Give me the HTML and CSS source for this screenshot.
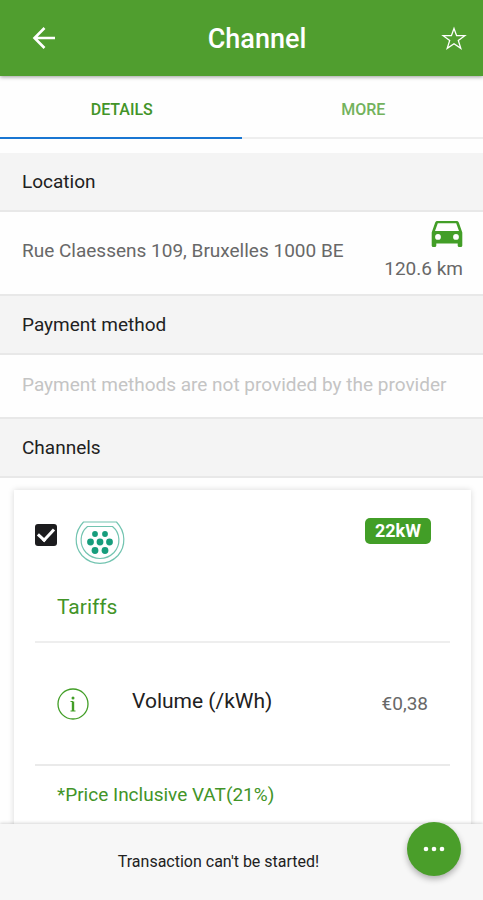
FILE: index.html
```html
<!DOCTYPE html>
<html lang="en">
<head>
<meta charset="utf-8">
<meta name="viewport" content="width=device-width, initial-scale=1">
<title>Channel</title>
<link rel="stylesheet" href="styles.css">
</head>
<body>
<header class="app-bar">
  <button class="icon-button" type="button" aria-label="Back">
    <svg width="24" height="24" viewBox="0 0 24 24" fill="none" stroke="currentColor" stroke-width="2.600"><path d="M23 12H3M12.500 2 2.500 12l10 10"/></svg>
  </button>
  <h1 class="title">Channel</h1>
  <button class="icon-button" type="button" aria-label="Favourite">
    <svg width="26" height="26" viewBox="0 0 26 26" fill="none" stroke="currentColor" stroke-width="1.300"><path d="M13 3.500l2.600 7.200h8.200l-6.500 4.700 2.500 8L13 18.700l-6.800 4.700 2.500-8L2.200 10.700h8.200z"/></svg>
  </button>
</header>
<nav class="tabs">
  <a class="tab active" href="#details">Details</a>
  <a class="tab" href="#more">More</a>
</nav>
<main class="content" id="details">
  <h2 class="band">Location</h2>
  <div class="row location">
    <span class="address">Rue Claessens 109, Bruxelles 1000 BE</span>
    <span class="distance">
      <svg width="32" height="26" viewBox="0 0 32 26"><path fill="#429e27" fill-rule="evenodd" d="M6.500 0h19c1.200 0 2 .7 2.400 1.700L31.300 11.500V24.500c0 .9-.6 1.500-1.500 1.500h-1.600c-.9 0-1.500-.6-1.500-1.500V22.500H5.300v2c0 .9-.6 1.500-1.500 1.500H2.200C1.300 26 .7 25.400.7 24.500v-13L4.100 1.700C4.500.7 5.300 0 6.500 0zM6.800 2.200 4 10h24L25.200 2.200zM7 13a2.900 2.900 0 1 0 0 5.800A2.900 2.900 0 0 0 7 13zm18 0a2.900 2.900 0 1 0 0 5.800A2.900 2.900 0 0 0 25 13z"/></svg>
      120.6 km
    </span>
  </div>
  <h2 class="band">Payment method</h2>
  <p class="row muted">Payment methods are not provided by the provider</p>
  <h2 class="band">Channels</h2>
  <section class="card">
    <div class="connector">
      <input class="check" type="checkbox" aria-label="Select 22kW channel" checked>
      <svg class="plug" width="50" height="44" viewBox="0 0 50 44" fill="none" stroke="#72c4b0" stroke-width="1.200"><path d="M8.500 1h33C51 11 51 25 43 34.500 33 45 17 45 7 34.500-1 25-1 11 8.500 1z"/><path d="M12.500 5.500h25C45.500 12 46 24 39 31.500c-8 8-20 8-28 0C4 24 4.500 12 12.500 5.500z"/><g fill="#179d7c" stroke="none"><circle cx="20" cy="13" r="2.900"/><circle cx="30" cy="13" r="2.900"/><circle cx="15.500" cy="21" r="3.400"/><circle cx="25" cy="21" r="3.400"/><circle cx="34.500" cy="21" r="3.400"/><circle cx="20" cy="29.500" r="3.400"/><circle cx="30" cy="29.500" r="3.400"/></g></svg>
      <span class="power">22kW</span>
    </div>
    <h3 class="tariffs">Tariffs</h3>
    <div class="tariff">
      <button class="info" type="button" aria-label="Tariff information">
        <svg width="32" height="32" viewBox="0 0 32 32" fill="none" stroke="#429e27"><circle cx="16" cy="16" r="15" stroke-width="1.300"/><path stroke-width="2.400" d="M16 13.500V23"/><path stroke-width="1.200" d="M13.500 13.500H16M13.500 23h5"/><circle cx="16" cy="10" r="1.500" fill="#429e27" stroke="none"/></svg>
      </button>
      <span class="name">Volume (/kWh)</span>
      <span class="price">€0,38</span>
    </div>
    <p class="vat">*Price Inclusive VAT(21%)</p>
  </section>
</main>
<footer class="status">
  <p class="message">Transaction can't be started!</p>
  <button class="fab" type="button" aria-label="More actions">
    <svg width="22" height="6" viewBox="0 0 22 6" fill="currentColor"><circle cx="3" cy="3" r="2.300"/><circle cx="11" cy="3" r="2.300"/><circle cx="19" cy="3" r="2.300"/></svg>
  </button>
</footer>
</body>
</html>
```
FILE: styles.css
```css
* { box-sizing: border-box; }
body {
  margin: 0;
  height: 100vh;
  display: flex;
  flex-direction: column;
  overflow: hidden;
  background: #fefefe;
  color: #212121;
  font-family: Roboto, sans-serif;
  font-size: 19px;
  line-height: 24px;
}
h1, h2, h3, p { margin: 0; font-weight: 400; }
button { border: 0; padding: 0; background: none; color: inherit; font: inherit; }
svg { display: block; }

.app-bar {
  flex: none;
  display: flex;
  align-items: center;
  justify-content: space-between;
  height: 76px;
  padding: 0 16px 0 31px;
  background: #509e2f;
  color: #fff;
  box-shadow: 0 1px 4px rgba(0, 0, 0, 0.4);
  position: relative;
}
.icon-button { width: 26px; height: 26px; display: grid; place-items: center; }
.title { margin-left: 16px; padding-top: 2px; font-size: 27px; line-height: 32px; font-weight: 500; }

.tabs { flex: none; display: flex; height: 63px; }
.tab {
  flex: 1;
  display: grid;
  place-items: center;
  padding: 6px 0 0 2px;
  border-bottom: 2px solid #eee;
  color: #73b25d;
  font-size: 16px;
  font-weight: 500;
  text-transform: uppercase;
  text-decoration: none;
}
.tab.active { color: #429428; border-color: #1976d2; }

.content { flex: 1; min-height: 0; overflow: hidden; padding-top: 14px; }
.band {
  padding: 17px 22px 16px;
  background: #f4f4f4;
  border-bottom: 2px solid #e8e8e8;
  font-size: 19px;
}
.row {
  padding: 18px 22px 20px;
  border-bottom: 2px solid #e8e8e8;
}
.location {
  display: flex;
  align-items: center;
  justify-content: space-between;
  padding: 9px 20px 13px 22px;
  color: #686868;
}
.distance {
  display: flex;
  flex-direction: column;
  align-items: flex-end;
  gap: 10px;
}
.muted { color: #c4c4c4; }

.card {
  margin: 12px 12px 0 14px;
  padding: 28px 21px 60px;
  background: #fff;
  box-shadow: 0 0 6px rgba(0, 0, 0, 0.15);
}
.connector { display: flex; align-items: flex-start; }
.check {
  appearance: none;
  width: 22px;
  height: 22px;
  margin: 6px 18px 0 0;
  border-radius: 3px;
  background: #1c1c1e;
  display: grid;
  place-items: center;
}
.check:checked::before {
  content: "";
  width: 13px;
  height: 7px;
  border: solid #fff;
  border-width: 0 0 3px 3px;
  transform: translateY(-2px) rotate(-47deg);
}
.plug { margin-top: 3px; }
.power {
  margin-left: auto;
  margin-right: 19px;
  padding: 1px 10px;
  border-radius: 5px;
  background: #429e27;
  color: #fff;
  font-size: 18px;
  font-weight: 700;
}
.tariffs {
  padding: 30px 22px 22px;
  border-bottom: 2px solid #eee;
  color: #429428;
  font-size: 21px;
}
.tariff {
  display: flex;
  align-items: center;
  height: 123px;
  padding: 0 22px;
  border-bottom: 2px solid #eaeaea;
}
.name { margin-left: 43px; font-size: 21px; padding-bottom: 6px; }
.price { margin-left: auto; color: #686868; }
.vat { padding: 17px 22px; color: #429428; }

.status {
  flex: none;
  display: flex;
  align-items: center;
  justify-content: center;
  height: 76px;
  background: #f7f7f7;
  box-shadow: 0 -1px 3px rgba(0, 0, 0, 0.16);
  position: relative;
}
.message { font-size: 16px; padding-right: 46px; }
.fab {
  position: absolute;
  right: 22px;
  top: -2px;
  width: 54px;
  height: 54px;
  border-radius: 50%;
  background: #4a9e2a;
  color: #fff;
  display: grid;
  place-items: center;
  box-shadow: 0 3px 6px rgba(0, 0, 0, 0.3);
}
```
